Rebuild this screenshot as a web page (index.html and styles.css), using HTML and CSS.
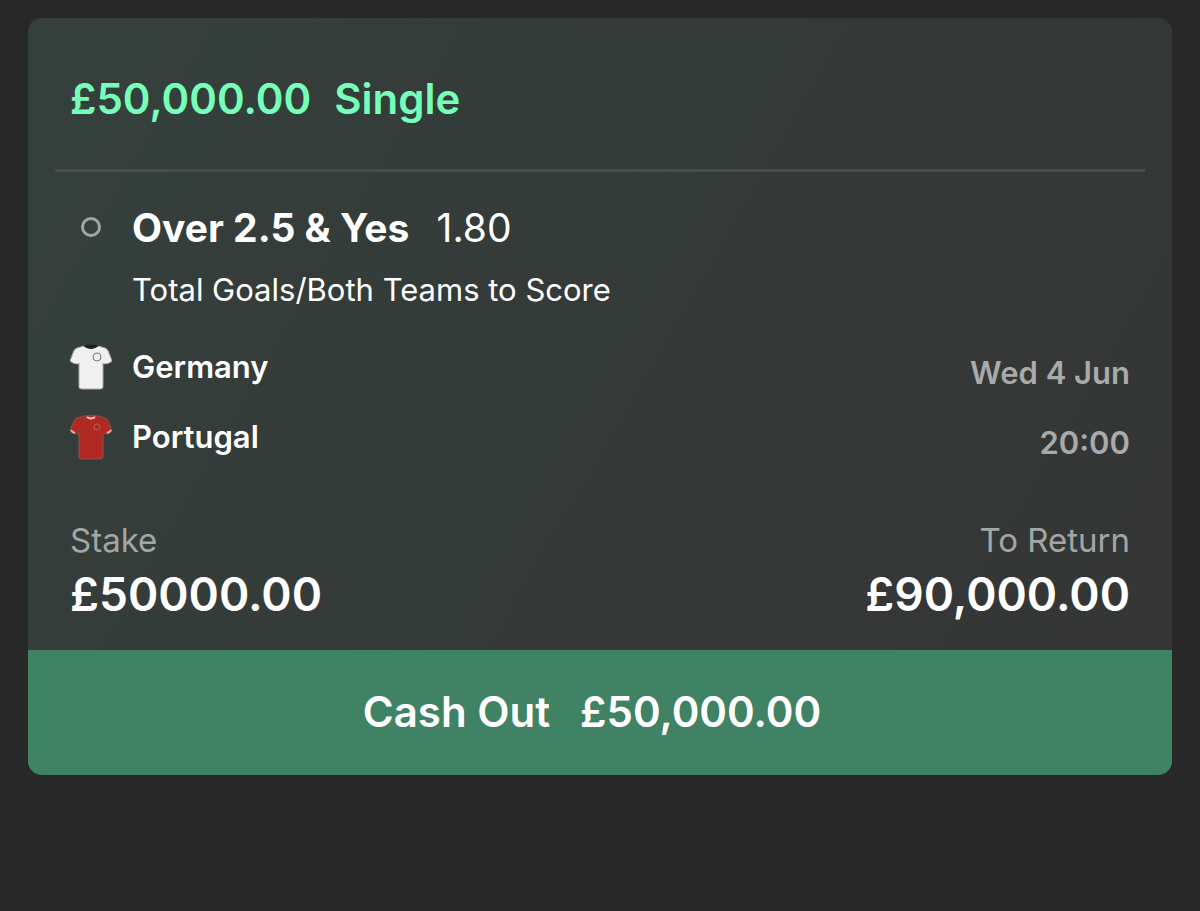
FILE: index.html
```html
<!DOCTYPE html>
<html lang="en">
<head>
    <meta charset="UTF-8">
    <meta name="viewport" content="width=device-width, initial-scale=1.0">
    <title>My Bets</title>
    <link rel="stylesheet" href="styles.css">
</head>
<body>

    <main class="bet-card">
        <h1 class="bet-header">
            <span>£50,000.00</span>
            <span>Single</span>
        </h1>

        <section class="bet-body">
            <!-- Selection -->
            <div class="selection">
                <span class="marker"></span>
                <div>
                    <h2 class="selection-title">Over 2.5 &amp; Yes <span class="odds">1.80</span></h2>
                    <p class="market">Total Goals/Both Teams to Score</p>
                </div>
            </div>

            <!-- Teams and kick-off -->
            <div class="fixture">
                <div class="teams">
                    <div class="team">
                        <svg class="shirt" viewBox="0 0 42 46" aria-hidden="true">
                            <path d="M14 2 L7 4 Q4 5 3 9 L0 17 Q3 20 8 20 L9 19 V43 Q9 45 12 45 H30 Q33 45 33 43 V19 L34 20 Q39 20 42 17 L39 9 Q38 5 35 4 L28 2 Q21 5 14 2 Z" fill="#f0f0f0" stroke="#a8aaa9"/>
                            <path d="M14 2 Q21 0 28 2 Q21 7 14 2 Z" fill="#1e2121" stroke="#1e2121"/>
                            <circle cx="27" cy="13" r="4" fill="none" stroke="#777"/>
                        </svg>
                        <span>Germany</span>
                    </div>
                    <div class="team">
                        <svg class="shirt" viewBox="0 0 42 46" aria-hidden="true">
                            <path d="M14 2 L7 4 Q4 5 3 9 L0 17 Q3 20 8 20 L9 19 V43 Q9 45 12 45 H30 Q33 45 33 43 V19 L34 20 Q39 20 42 17 L39 9 Q38 5 35 4 L28 2 Q21 1 14 2 Z" fill="#b02a23" stroke="#8b5246"/>
                            <path d="M1 16 Q2 18 5 19 M41 16 Q40 18 37 19" fill="none" stroke="#e3aaa5" stroke-width="2"/>
                            <path d="M17 3 Q21 6 25 3" fill="none" stroke="#f0c9c4" stroke-width="2"/>
                            <circle cx="27" cy="13" r="3" fill="none" stroke="#d0574e"/>
                            <path d="M25 11 L29 15 M29 11 L25 15" stroke="#7c3a34"/>
                        </svg>
                        <span>Portugal</span>
                    </div>
                </div>
                <div class="kickoff">
                    <span>Wed 4 Jun</span>
                    <span>20:00</span>
                </div>
            </div>

            <!-- Stake and returns -->
            <dl class="totals">
                <div>
                    <dt>Stake</dt>
                    <dd>£50000.00</dd>
                </div>
                <div class="to-return">
                    <dt>To Return</dt>
                    <dd>£90,000.00</dd>
                </div>
            </dl>
        </section>

        <button type="button" class="cash-out">
            <span>Cash Out</span>
            <span>£50,000.00</span>
        </button>
    </main>

</body>
</html>
```
FILE: styles.css
```css
* {
    margin: 0;
    padding: 0;
    box-sizing: border-box;
}

body {
    font-family: Inter, "Liberation Sans", sans-serif;
    background-color: #282828;
    color: #fff;
    padding: 18px 28px;
}

.bet-card {
    background: linear-gradient(120deg, #35403c 0%, #343a38 50%, #353535 100%);
    border-radius: 14px;
    overflow: hidden;
}

.bet-header {
    display: flex;
    gap: 23px;
    margin: 0 27px;
    padding: 56px 15px 45px;
    border-bottom: 3px solid #474d4b;
    color: #75ffb9;
    font-size: 42px;
    font-weight: 600;
    line-height: 50px;
}

.bet-body {
    padding: 32px 42px 27px;
}

.selection {
    display: flex;
}

.marker {
    width: 20px;
    height: 20px;
    margin: 13px 31px 0 11px;
    border: 3px solid #a3a6a5;
    border-radius: 50%;
}

.selection-title {
    font-size: 39px;
    font-weight: 700;
    line-height: 48px;
}

.odds {
    margin-left: 18px;
    font-weight: 400;
}

.market {
    margin-top: 18px;
    font-size: 31px;
    line-height: 40px;
}

.fixture {
    display: flex;
    justify-content: space-between;
    margin-top: 34px;
}

.teams,
.kickoff {
    display: flex;
    flex-direction: column;
    gap: 24px;
    font-size: 31px;
    font-weight: 600;
    line-height: 46px;
}

.team {
    display: flex;
    gap: 20px;
}

.shirt {
    width: 42px;
    height: 46px;
}

.kickoff {
    padding-top: 6px;
    color: #a9abaa;
    text-align: right;
}

.totals {
    display: flex;
    justify-content: space-between;
    margin-top: 49px;
}

.totals dt {
    color: #a3a6a5;
    font-size: 33px;
    line-height: 50px;
}

.totals dd {
    font-size: 46px;
    font-weight: 600;
    line-height: 58px;
}

.to-return {
    text-align: right;
}

.cash-out {
    display: flex;
    justify-content: center;
    gap: 30px;
    width: 100%;
    padding: 37px 16px 38px 0;
    border: none;
    background-color: #3f8264;
    color: #fff;
    font-family: inherit;
    font-size: 42px;
    font-weight: 600;
    line-height: 50px;
    cursor: pointer;
}
```
